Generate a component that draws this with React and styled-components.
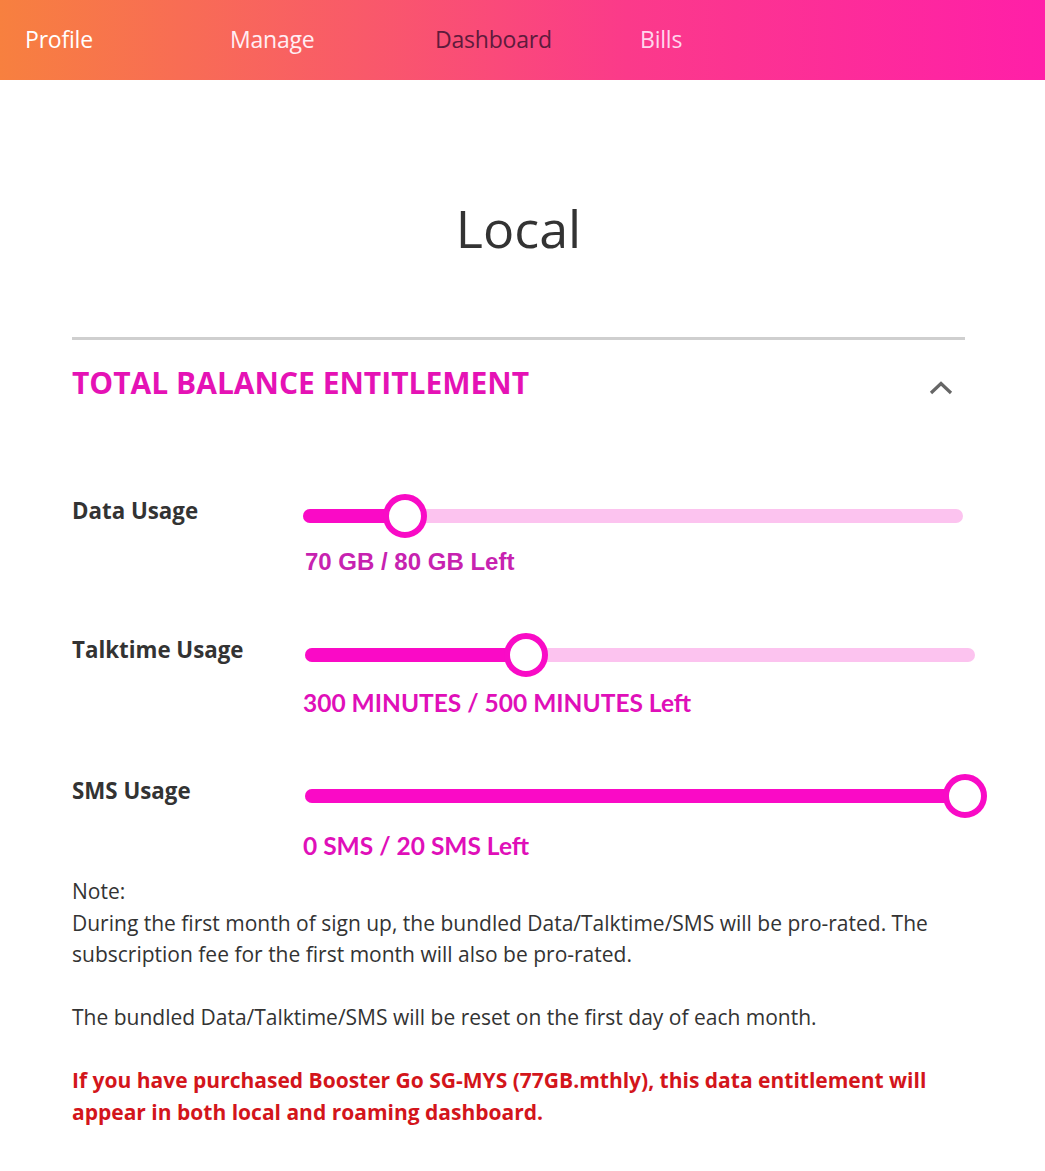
import React from "react";
import styled, { createGlobalStyle } from "styled-components";

const Global = createGlobalStyle`
  html, body { margin: 0; padding: 0; background: #fff; }
  body { font-family: "Open Sans", "Liberation Sans", sans-serif; color: #333; }
  * { box-sizing: border-box; }
`;

const Nav = styled.nav`
  height: 80px;
  display: flex;
  align-items: center;
  padding-left: 25px;
  background: linear-gradient(90deg, #f7803f 0%, #f9596a 35%, #fb3a8a 60%, #ff1fa8 100%);
`;

const NavItem = styled.a`
  width: 205px;
  font-size: 23px;
  line-height: 30px;
  color: ${(p) => p.$color};
  text-decoration: none;
  letter-spacing: -0.2px;
  margin-top: -2px;
`;

const Main = styled.main`
  padding: 0 80px 40px 72px;
`;

const Title = styled.h1`
  margin: 113px 0 0;
  text-align: center;
  font-weight: 400;
  font-size: 52px;
  line-height: 70px;
  color: #333;
`;

const Rule = styled.hr`
  margin: 74px 0 0;
  border: 0;
  height: 3px;
  background: #cfcfcf;
`;

const SectionHead = styled.div`
  margin-top: 25px;
  display: flex;
  align-items: center;
  justify-content: space-between;
  height: 40px;
`;

const SectionTitle = styled.h2`
  margin: 0;
  font-size: 30px;
  line-height: 40px;
  font-weight: 700;
  color: #e512b5;
  margin-top: -4px;
`;

const Chevron = styled.svg`
  width: 26px;
  height: 16px;
  margin-right: 11px;
  margin-top: 6px;
`;

const Rows = styled.div`
  margin-top: 89px;
  display: flex;
  flex-direction: column;
  gap: ${(p) => p.$gap}px;
`;

const Row = styled.div`
  display: grid;
  grid-template-columns: 231px 1fr;
  row-gap: ${(p) => p.$valueGap}px;
`;

const Label = styled.div`
  font-size: 22.3px;
  font-weight: 700;
  color: #333;
  line-height: 44px;
  margin-top: -5px;
`;

const SliderArea = styled.div`
  position: relative;
  height: 44px;
  display: flex;
  align-items: center;
  padding-left: ${(p) => p.$offset}px;
`;

const Track = styled.div`
  position: relative;
  width: ${(p) => p.$width}px;
  height: 14px;
  border-radius: 7px;
  background: #fcc3ef;
`;

const Fill = styled.div`
  position: absolute;
  left: 0;
  top: 0;
  bottom: 0;
  border-radius: 7px;
  background: #fa0ac6;
`;

const Thumb = styled.div`
  position: absolute;
  top: 50%;
  width: 44px;
  height: 44px;
  margin: -22px 0 0 -22px;
  border-radius: 50%;
  background: #fff;
  border: 6px solid #f90bc6;
`;

const Value = styled.div`
  grid-column: 2;
  line-height: 30px;
  font-weight: 700;
  padding-left: ${(p) => p.$offset}px;
  ${(p) =>
    p.$arial
      ? `font-family: "Liberation Sans", Arial, sans-serif; font-size: 24px; color: #c722b0;`
      : `font-family: Lato, "Open Sans", sans-serif; font-size: 24.5px; color: #e00fb9;`}
`;

const Notes = styled.div`
  margin-top: 15px;
  font-size: 21px;
  line-height: 31.5px;
  color: #333;
`;

const P = styled.p`
  margin: 0 0 ${(p) => p.$mb || 0}px;
`;

const Warning = styled.p`
  margin: 0;
  font-size: 21px;
  font-weight: 700;
  color: #d3151b;
`;

const usage = [
  { label: "Data Usage", value: "70 GB / 80 GB Left", pct: 0.155, width: 660, offset: 0, arial: true, valueOffset: 2, valueGap: 9 },
  { label: "Talktime Usage", value: "300 MINUTES / 500 MINUTES Left", pct: 0.33, width: 670, offset: 2, valueGap: 11 },
  { label: "SMS Usage", value: "0 SMS / 20 SMS Left", pct: 1, width: 660, offset: 2, valueGap: 13 },
];

function Slider({ pct, width, offset }) {
  return (
    <SliderArea $offset={offset}>
      <Track $width={width}>
        <Fill style={{ width: `${pct * 100}%` }} />
        <Thumb style={{ left: `${pct * 100}%` }} />
      </Track>
    </SliderArea>
  );
}

export default function App() {
  return (
    <>
      <Global />
      <Nav>
        <NavItem $color="#ffffff">Profile</NavItem>
        <NavItem $color="#ffeef4">Manage</NavItem>
        <NavItem $color="#5e1b3c">Dashboard</NavItem>
        <NavItem $color="#ffd6ee">Bills</NavItem>
      </Nav>
      <Main>
        <Title>Local</Title>
        <Rule />
        <SectionHead>
          <SectionTitle>TOTAL BALANCE ENTITLEMENT</SectionTitle>
          <Chevron viewBox="0 0 26 16">
            <path d="M3 13 L13 3.5 L23 13" fill="none" stroke="#666" strokeWidth="3.2" />
          </Chevron>
        </SectionHead>
        <Rows $gap={56}>
          {usage.map((u) => (
            <Row key={u.label} $valueGap={u.valueGap}>
              <Label>{u.label}</Label>
              <Slider pct={u.pct} width={u.width} offset={u.offset} />
              <Value $arial={u.arial} $offset={u.valueOffset || 0}>{u.value}</Value>
            </Row>
          ))}
        </Rows>
        <Notes>
          <P>Note:</P>
          <P $mb={31.5}>
            During the first month of sign up, the bundled Data/Talktime/SMS will be pro-rated. The subscription fee for the first month will also be pro-rated.
          </P>
          <P $mb={31.5}>The bundled Data/Talktime/SMS will be reset on the first day of each month.</P>
          <Warning>
            If you have purchased Booster Go SG-MYS (77GB.mthly), this data entitlement will appear in both local and roaming dashboard.
          </Warning>
        </Notes>
      </Main>
    </>
  );
}
